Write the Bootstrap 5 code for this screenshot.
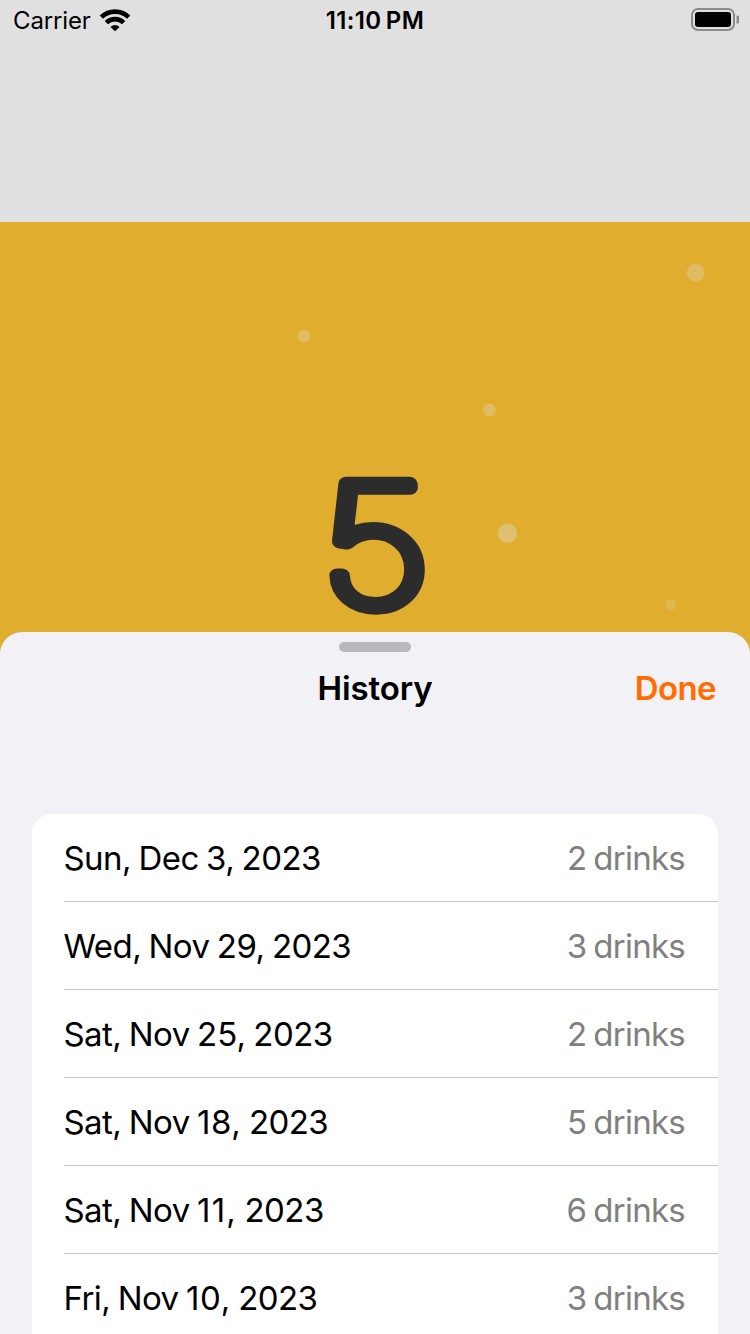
<!DOCTYPE html>
<html lang="en">
<head>
<meta charset="utf-8">
<meta name="viewport" content="width=device-width, initial-scale=1">
<title>History</title>
<link href="https://cdn.jsdelivr.net/npm/bootstrap@5.3.0/dist/css/bootstrap.min.css" rel="stylesheet">
<style>
  body { font-family: Inter, "Liberation Sans", sans-serif; background: #e0e0e0; color: #000; }
  .screen { height: 1334px; }
  .status-bar { height: 40px; padding: 0 11px 0 13px; font-size: 24px; line-height: 40px; }
  .status-bar > div { flex: 1 1 0; }
  .status-bar svg { display: block; }
  .carrier { letter-spacing: -.15px; padding-top: 1px; }
  .clock { font-size: 24px; font-weight: 600; letter-spacing: .35px; word-spacing: -2px; white-space: nowrap; padding-top: 2px; margin-left: -2px; }
  .glass { height: 440px; margin-top: 182px; background: #e0ad2e; }
  .glass svg { display: block; }
  .sheet { margin-top: -30px; background: #f2f1f6; border-radius: 22px 22px 0 0; }
  .grabber { width: 72px; height: 10px; margin-top: 10px; background: #b8b8be; }
  .sheet-bar { height: 72px; padding: 0 34px; font-size: 33px; line-height: 72px; font-weight: 600; }
  .sheet-bar > * { flex: 1 1 0; }
  .sheet-title { letter-spacing: -.1px; }
  .done { color: #ff6c00; letter-spacing: -.6px; font-weight: 600; }
  .history { margin: 90px 32px 0; border-radius: 20px 20px 0 0; --bs-list-group-border-radius: 20px; background: #fff; padding-left: 32px; }
  .history .list-group-item { height: 88px; padding: 0 33px 0 0; border-color: #c6c6c8; color: #000; font-size: 33px; background: transparent; letter-spacing: -.55px; word-spacing: -1.3px; line-height: 88px; }
  .history .list-group-item > :first-child { margin-left: -.5px; }
  .day-mid { letter-spacing: 0; }
  .day-wide { letter-spacing: .6px; }
  .day-ones { letter-spacing: 1.2px; }
  .history .drinks { color: #808080; letter-spacing: -.75px; word-spacing: -1.5px; }
</style>
</head>
<body>
<main class="screen overflow-hidden d-flex flex-column">
  <header class="status-bar d-flex align-items-center flex-shrink-0">
    <div class="d-flex align-items-center">
      <span class="carrier">Carrier</span>
      <svg class="ms-2" width="32" height="24" viewBox="0 0 32 24" fill="none" stroke="#000" stroke-width="4.600">
        <path d="M2.300 9.200C10 1.700 22 1.700 29.700 9.200"/>
        <path d="M7.300 14.600C12.300 9.900 19.700 9.900 24.700 14.600"/>
        <path d="M11.400 18.900Q16 14.900 20.600 18.900L16 23.300Z" fill="#000" stroke="none"/>
      </svg>
    </div>
    <div class="clock text-center">11:10 PM</div>
    <div class="d-flex justify-content-end">
      <svg width="49" height="24" viewBox="0 0 49 24">
        <rect x="2" y="1" width="42" height="21" rx="6" fill="none" stroke="#8b8b8b" stroke-width="2"/>
        <rect x="5" y="4" width="36" height="15" rx="3" fill="#000"/>
        <path d="M46.500 7.500a4 4 0 0 1 0 8Z" fill="#8b8b8b"/>
      </svg>
    </div>
  </header>

  <section class="glass flex-shrink-0">
    <svg width="750" height="440" viewBox="0 222 750 440">
      <g fill="#dfbb61">
        <circle cx="695.800" cy="272.500" r="9"/>
        <circle cx="303.800" cy="336" r="6.500"/>
        <circle cx="489.500" cy="410" r="6.500"/>
        <circle cx="507.500" cy="533.300" r="9.700" fill="#dfc070"/>
        <circle cx="670.500" cy="604.700" r="5.300" fill="#dfb853"/>
      </g>
      <text transform="translate(377 606) skewX(1.700) scale(1.160 1)" text-anchor="middle" font-family="Inter" font-weight="100" font-size="168" fill="#2c2c2c" stroke="#2c2c2c" stroke-width="14" stroke-linejoin="round">5</text>
    </svg>
  </section>

  <section class="sheet flex-grow-1">
    <div class="grabber rounded-pill mx-auto"></div>
    <div class="sheet-bar d-flex align-items-center">
      <span></span>
      <span class="sheet-title text-center">History</span>
      <a class="done text-end text-decoration-none" href="#">Done</a>
    </div>
    <ul class="history list-group list-group-flush">
      <li class="list-group-item d-flex justify-content-between"><span>Sun, Dec 3, 2023</span><span class="drinks">2 drinks</span></li>
      <li class="list-group-item d-flex justify-content-between"><span>Wed, Nov 29, 2023</span><span class="drinks">3 drinks</span></li>
      <li class="list-group-item d-flex justify-content-between"><span>Sat, Nov <span class="day-mid">25,</span> 2023</span><span class="drinks">2 drinks</span></li>
      <li class="list-group-item d-flex justify-content-between"><span>Sat, Nov <span class="day-wide">18,</span> 2023</span><span class="drinks">5 drinks</span></li>
      <li class="list-group-item d-flex justify-content-between"><span>Sat, Nov <span class="day-ones">11,</span> 2023</span><span class="drinks">6 drinks</span></li>
      <li class="list-group-item d-flex justify-content-between"><span>Fri, Nov <span class="day-wide">10,</span> 2023</span><span class="drinks">3 drinks</span></li>
    </ul>
  </section>
</main>
<script src="https://cdn.jsdelivr.net/npm/bootstrap@5.3.0/dist/js/bootstrap.bundle.min.js"></script>
</body>
</html>
